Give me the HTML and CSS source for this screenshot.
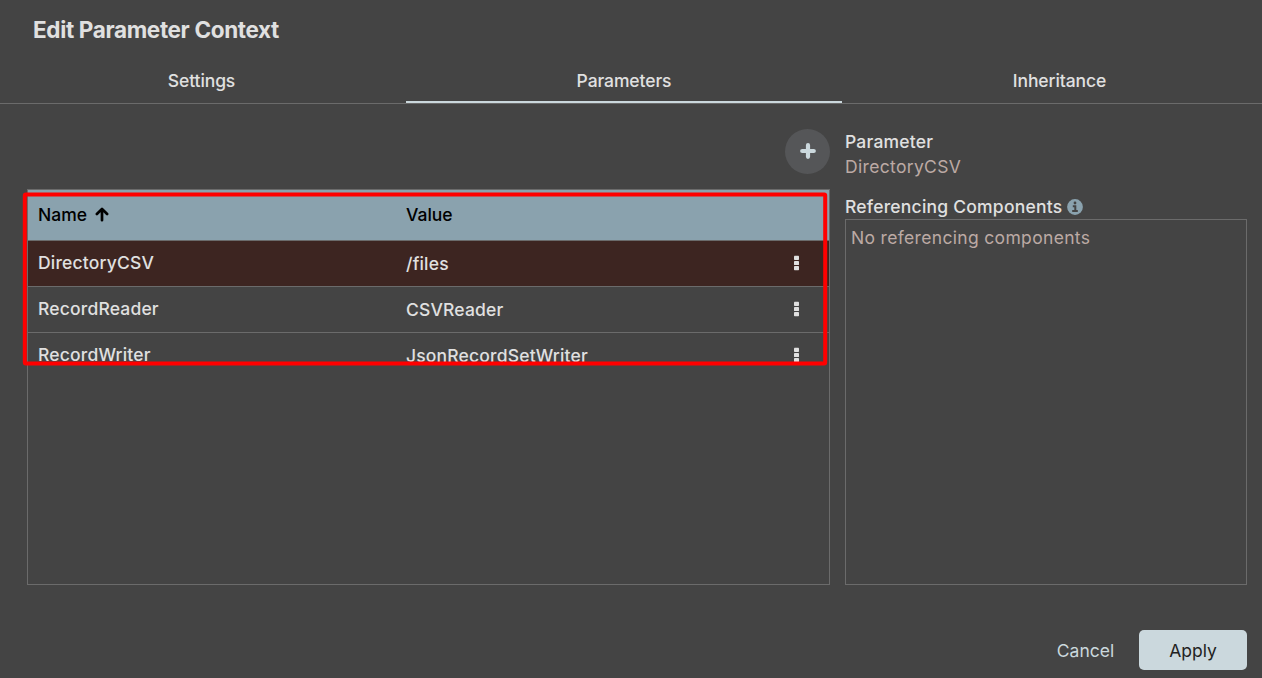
FILE: index.html
```html
<!DOCTYPE html>
<html lang="en">
<head>
<meta charset="utf-8">
<title>Edit Parameter Context</title>
<link rel="stylesheet" href="styles.css">
</head>
<body>
<main class="dialog">
  <h1 class="title">Edit Parameter Context</h1>
  <nav class="tabs">
    <a class="tab">Settings</a>
    <a class="tab active">Parameters</a>
    <a class="tab inheritance">Inheritance</a>
  </nav>
  <div class="content">
    <section class="left">
      <div class="toolbar">
        <button class="add" aria-label="Add parameter">
          <svg width="16" height="16" viewBox="0 0 16 16"><path d="M8 2.2v11.6M2.2 8h11.6" stroke="#cbd8dd" stroke-width="4.2" stroke-linecap="round"/></svg>
        </button>
      </div>
      <div class="listing">
        <div class="row head">
          <div class="cell">Name
            <svg class="arrow" width="14" height="16" viewBox="0 0 14 16"><path d="M7 13.2V2.2M1.9 7 7 1.9 12.1 7" fill="none" stroke="#000" stroke-width="2.7" stroke-linecap="round" stroke-linejoin="round"/></svg>
          </div>
          <div class="cell">Value</div>
        </div>
        <div class="row selected">
          <div class="cell">DirectoryCSV</div>
          <div class="cell value">/files</div>
          <svg class="dots" width="6" height="17" viewBox="0 0 6 17"><g fill="#e0e0e0"><rect y="1.8" width="5" height="4.2" rx=".7"/><rect y="6.9" width="5" height="4.2" rx=".7"/><rect y="12" width="5" height="4.2" rx=".7"/></g></svg>
        </div>
        <div class="row">
          <div class="cell">RecordReader</div>
          <div class="cell value">CSVReader</div>
          <svg class="dots" width="6" height="17" viewBox="0 0 6 17"><g fill="#e0e0e0"><rect y="1.8" width="5" height="4.2" rx=".7"/><rect y="6.9" width="5" height="4.2" rx=".7"/><rect y="12" width="5" height="4.2" rx=".7"/></g></svg>
        </div>
        <div class="row last">
          <div class="cell">RecordWriter</div>
          <div class="cell value">JsonRecordSetWriter</div>
          <svg class="dots" width="6" height="17" viewBox="0 0 6 17"><g fill="#e0e0e0"><rect y="1.8" width="5" height="4.2" rx=".7"/><rect y="6.9" width="5" height="4.2" rx=".7"/><rect y="12" width="5" height="4.2" rx=".7"/></g></svg>
        </div>
        <svg class="highlight" width="806" height="176" viewBox="0 0 806 176"><rect x="2.8" y="2.6" width="800.4" height="169" rx="1" fill="none" stroke="#f00" stroke-width="4"/></svg>
      </div>
    </section>
    <aside class="right">
      <div class="label">Parameter</div>
      <div class="muted">DirectoryCSV</div>
      <div class="label refs">Referencing Components
        <svg class="info" width="16" height="16" viewBox="0 0 16 16"><circle cx="8" cy="8" r="7.9" fill="#8aa2ae"/><path d="M5.8 7.3h2.5v4.7M5.2 12h5.6" fill="none" stroke="#444" stroke-width="2"/><circle cx="8" cy="4" r="1.4" fill="#444"/></svg>
      </div>
      <div class="refbox">No referencing components</div>
    </aside>
  </div>
  <footer class="actions">
    <button class="btn cancel">Cancel</button>
    <button class="btn apply">Apply</button>
  </footer>
</main>
</body>
</html>
```
FILE: styles.css
```css
* { box-sizing: border-box; }
body {
  margin: 0;
  background: #444;
  color: #e0e0e0;
  font: 500 17.5px/24px Inter, "Liberation Sans", sans-serif;
}
.dialog {
  width: 1262px;
  height: 678px;
  display: flex;
  flex-direction: column;
  overflow: hidden;
}
.title {
  margin: 0;
  height: 59px;
  padding: 14px 0 0 33px;
  font-size: 22.5px;
  line-height: 32px;
  font-weight: 700;
  letter-spacing: -0.35px;
}
.tabs {
  display: grid;
  grid-template-columns: 406px 436px 420px;
  height: 45px;
  border-bottom: 1px solid #6b6b6b;
  letter-spacing: -0.1px;
}
.tab {
  display: flex;
  justify-content: center;
  padding-top: 10px;
  padding-right: 3px;
}
.tab.active {
  border-bottom: 2px solid #cbd8dd;
  padding-right: 0;
}
.tab.inheritance {
  padding-right: 0;
  padding-left: 15px;
}
.content {
  display: flex;
  gap: 15px;
  padding: 25px 15px 0 27px;
  height: 481px;
}
.left { width: 803px; }
.toolbar {
  display: flex;
  justify-content: flex-end;
  height: 60px;
}
.add {
  display: flex;
  align-items: center;
  justify-content: center;
  width: 45px;
  height: 45px;
  padding: 0 0 2px;
  border: 0;
  border-radius: 50%;
  background: #555658;
}
.listing {
  position: relative;
  height: 396px;
  border: 1px solid #6b6b6b;
}
.row {
  display: grid;
  grid-template-columns: 368px 388px auto;
  align-items: center;
  height: 46px;
  padding: 0 0 2px 10px;
  border-bottom: 1px solid #6b6b6b;
  letter-spacing: 0.18px;
}
.row.head {
  height: 51px;
  padding-bottom: 0;
  background: #8aa2ae;
  color: #000;
  letter-spacing: 0;
}
.row.selected { background: #3d2521; }
.row.last { border-bottom-color: transparent; }
.cell {
  display: flex;
  align-items: center;
  gap: 8px;
  white-space: nowrap;
}
.cell.value { padding-top: 2px; }
.highlight {
  position: absolute;
  left: -6px;
  top: 2px;
}
.right { width: 402px; }
.label, .muted { height: 25px; }
.label { line-height: 26px; letter-spacing: 0.22px; }
.muted, .refbox {
  color: #bcaaa4;
  font-weight: 400;
  line-height: 26px;
  letter-spacing: 0.33px;
}
.refs {
  display: flex;
  align-items: center;
  gap: 5px;
  margin-top: 15px;
}
.refbox {
  height: 366px;
  padding: 5px;
  border: 1px solid #6b6b6b;
}
.actions {
  display: flex;
  justify-content: flex-end;
  padding: 45px 15px 0 0;
}
.btn {
  height: 40px;
  padding: 2px 0 0;
  border: 0;
  border-radius: 5px;
  background: none;
  font: inherit;
  font-weight: 400;
}
.cancel { width: 107px; color: #cbd8dd; }
.apply { width: 108px; background: #cbd8dd; color: #222; }
```
